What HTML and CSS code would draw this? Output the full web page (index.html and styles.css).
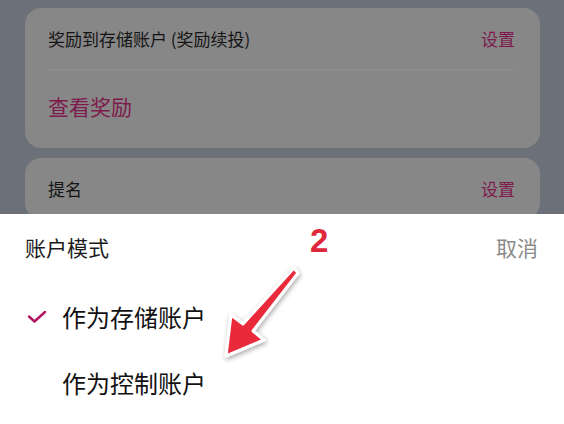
FILE: index.html
```html
<!DOCTYPE html>
<html lang="zh-CN">
<head>
<meta charset="utf-8">
<link rel="stylesheet" href="styles.css">
</head>
<body>
<div class="screen">
  <div class="backdrop">
    <div class="card">
      <div class="row">
        <span class="label">奖励到存储账户 (奖励续投)</span>
        <span class="action">设置</span>
      </div>
      <div class="divider"></div>
      <div class="row link-row">
        <span class="link">查看奖励</span>
      </div>
    </div>
    <div class="card">
      <div class="row">
        <span class="label">提名</span>
        <span class="action">设置</span>
      </div>
    </div>
  </div>
  <div class="sheet">
    <div class="sheet-header">
      <span class="sheet-title">账户模式</span>
      <span class="cancel">取消</span>
    </div>
    <div class="option">
      <span class="check">
        <svg width="20" height="14" viewBox="0 0 20 14"><path d="M2 6.5 L7.5 11.5 L18 2" fill="none" stroke="#b3145f" stroke-width="2.4" stroke-linecap="round" stroke-linejoin="round"/></svg>
      </span>
      <span class="option-text">作为存储账户</span>
    </div>
    <div class="option">
      <span class="check"></span>
      <span class="option-text">作为控制账户</span>
    </div>
  </div>
  <div class="step-num">2</div>
  <svg class="arrow" width="564" height="424" viewBox="0 0 564 424">
    <defs>
      <filter id="sh" x="-20%" y="-20%" width="140%" height="140%">
        <feDropShadow dx="1" dy="2" stdDeviation="2.5" flood-color="#000" flood-opacity="0.35"/>
      </filter>
    </defs>
    <path d="M294 268 L298 273 L253 331 L264 340 L226 356 L231 315 L243 324 Z" fill="#e8293b" stroke="#ffffff" stroke-width="3" stroke-linejoin="round" filter="url(#sh)"/>
  </svg>
</div>
</body>
</html>
```

FILE: styles.css
```css
* { box-sizing: border-box; }
html, body { margin: 0; padding: 0; }
body {
  width: 564px;
  height: 424px;
  overflow: hidden;
  font-family: "Noto Sans CJK SC", "Noto Sans", sans-serif;
  background: #ffffff;
}
.screen {
  position: relative;
  width: 564px;
  height: 424px;
  display: flex;
  flex-direction: column;
}
.backdrop {
  height: 214px;
  flex: none;
  overflow: hidden;
  background: #6c7179;
  padding: 8px 24px 0 25px;
  display: flex;
  flex-direction: column;
  gap: 10px;
}
.card {
  background: #878787;
  border-radius: 16px;
  padding: 0 25px 0 23px;
  flex: none;
}
.row {
  height: 61px;
  display: flex;
  align-items: center;
  justify-content: space-between;
}
.label {
  font-size: 17px;
  line-height: 24px;
  color: #151515;
}
.action {
  font-size: 17px;
  line-height: 24px;
  color: #7e1a4c;
}
.divider {
  height: 1px;
  background: #919191;
}
.link-row {
  height: 78px;
  align-items: flex-start;
  padding-top: 22px;
}
.link {
  font-size: 21px;
  line-height: 28px;
  color: #7e1a4c;
}
.sheet {
  flex: 1;
  background: #ffffff;
}
.sheet-header {
  height: 70px;
  display: flex;
  justify-content: space-between;
  align-items: flex-start;
  padding: 20px 26px 0 25px;
}
.sheet-title {
  font-size: 21px;
  line-height: 26px;
  color: #1a1a1a;
}
.cancel {
  font-size: 21px;
  line-height: 26px;
  color: #8a8a8a;
}
.option {
  height: 66px;
  display: flex;
  align-items: center;
  padding-left: 27px;
  gap: 15px;
}
.check {
  width: 20px;
  height: 14px;
  display: flex;
}
.option-text {
  font-size: 24px;
  line-height: 30px;
  color: #111111;
}
.step-num {
  position: absolute;
  left: 310px;
  top: 222px;
  font-family: "Liberation Sans", Arial, sans-serif;
  font-weight: 700;
  font-size: 33px;
  line-height: 38px;
  color: #e0283c;
}
.arrow {
  position: absolute;
  left: 0;
  top: 0;
  pointer-events: none;
}
```
